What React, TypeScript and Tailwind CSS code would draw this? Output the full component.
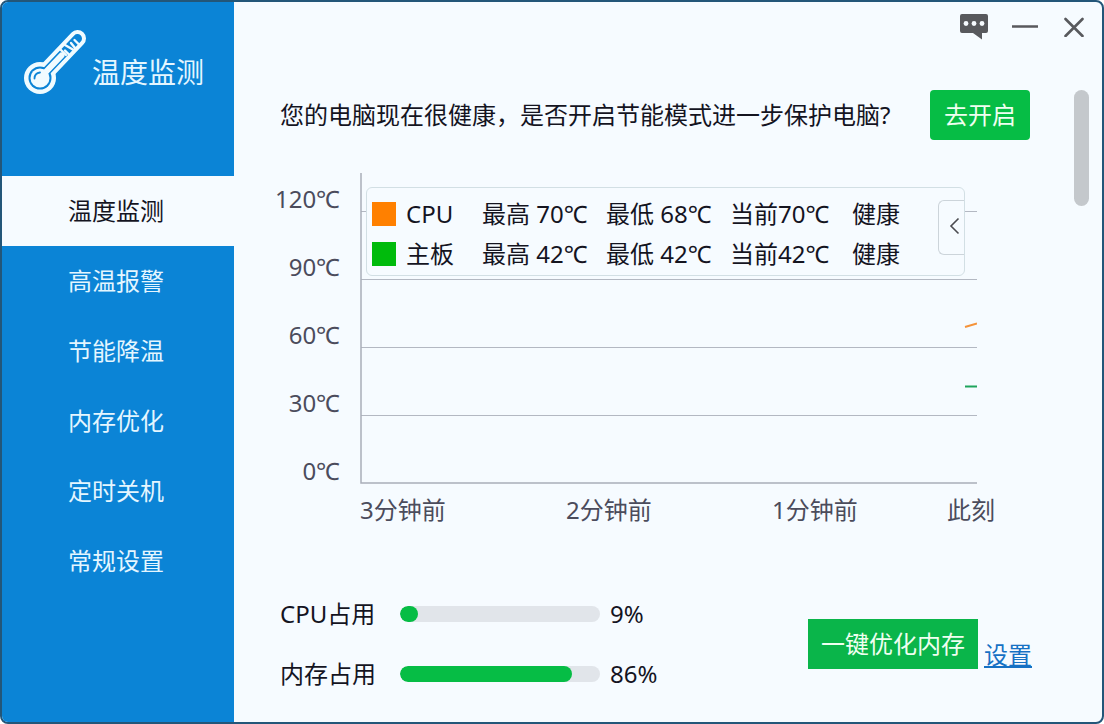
import { useState } from 'react';

const NAV_ITEMS = ['温度监测', '高温报警', '节能降温', '内存优化', '定时关机', '常规设置'];

const TEMP_LABELS = ['120℃', '90℃', '60℃', '30℃', '0℃'];
const GRID_LINES = [38, 106, 174, 242];

const SENSORS = [
  { name: 'CPU', color: 'bg-[#ff8000]', max: 70, min: 68, current: 70, status: '健康' },
  { name: '主板', color: 'bg-[#00bb0c]', max: 42, min: 42, current: 42, status: '健康' },
];

const USAGE = [
  { label: 'CPU占用', value: 9 },
  { label: '内存占用', value: 86 },
];

function ThermometerIcon() {
  return (
    <svg width="66" height="68" viewBox="0 0 66 68" fill="none" strokeLinecap="round" aria-hidden="true">
      {/* Glass */}
      <circle cx="18" cy="50" r="16" fill="#f0fbff" />
      <path d="M18 50 L55.500 10.500" stroke="#f0fbff" strokeWidth="17" />
      <circle cx="18" cy="50" r="11.500" fill="#0b84d6" />
      <path d="M18 50 L55.500 10.500" stroke="#0b84d6" strokeWidth="9" />
      {/* Mercury */}
      <circle cx="18" cy="50" r="9.500" fill="#f0fbff" />
      <path d="M18 50 L39.500 27.500" stroke="#f0fbff" strokeWidth="6" />
      <path d="M12.500 50.500 C12.500 47 14.500 45 18 44.500" stroke="#0b84d6" strokeWidth="1.800" />
      {/* Scale */}
      <path
        d="M38.500 21.500 L44 27 M43 22.500 L48 27.500 M43 17 L52.500 22.500 M49 15 L53 20 M52.500 12 L57.500 17"
        stroke="#f0fbff"
        strokeWidth="2.400"
      />
    </svg>
  );
}

function TitleBar() {
  return (
    <header className="mb-[38px] flex h-[50px] items-center justify-end pr-[18px] text-[#58595d]">
      <button type="button" aria-label="反馈" className="mr-6">
        <svg width="28" height="28" viewBox="0 0 28 28" aria-hidden="true">
          <path
            d="M2 1 H26 Q28 1 28 3 V18 Q28 20 26 20 H22 V26.500 L13 20 H2 Q0 20 0 18 V3 Q0 1 2 1 Z"
            fill="currentColor"
          />
          <circle cx="6" cy="10.500" r="2.400" fill="#f6fbff" />
          <circle cx="14" cy="10.500" r="2.400" fill="#f6fbff" />
          <circle cx="22" cy="10.500" r="2.400" fill="#f6fbff" />
        </svg>
      </button>
      <button type="button" aria-label="最小化" className="mr-[26px]">
        <svg width="26" height="20" viewBox="0 0 26 20" aria-hidden="true">
          <path d="M0 9.500 H26" stroke="currentColor" strokeWidth="2.600" />
        </svg>
      </button>
      <button type="button" aria-label="关闭">
        <svg width="20" height="20" viewBox="0 0 20 20" aria-hidden="true">
          <path d="M1.500 2 L18.500 19 M18.500 2 L1.500 19" stroke="currentColor" strokeWidth="2.600" strokeLinecap="round" />
        </svg>
      </button>
    </header>
  );
}

function Legend() {
  return (
    <div className="absolute top-3.5 right-3 left-1.5 h-[89px] rounded-md border border-[#d2dfe4] bg-[#f6fbff]">
      <table className="mt-1.5 ml-[5px] table-fixed border-collapse text-left whitespace-nowrap">
        <tbody>
          {SENSORS.map((s) => (
            <tr key={s.name} className="h-10">
              <td className="w-[34px] p-0">
                <span className={`block h-6 w-6 ${s.color}`} />
              </td>
              <th scope="row" className="w-[76px] p-0 font-normal">{s.name}</th>
              <td className="w-[124px] p-0">最高 {s.max}℃</td>
              <td className="w-[124px] p-0">最低 {s.min}℃</td>
              <td className="w-[122px] p-0">当前{s.current}℃</td>
              <td className="p-0">{s.status}</td>
            </tr>
          ))}
        </tbody>
      </table>
      <button
        type="button"
        aria-label="收起"
        className="absolute top-3 right-0 flex h-[55px] w-[26px] items-center justify-end rounded-l-md border border-r-0 border-[#ccd4da] pr-1 pb-1"
      >
        <svg width="12" height="18" viewBox="0 0 12 18" fill="none" aria-hidden="true">
          <path d="M10.500 1.500 L3 9 L10.500 16.500" stroke="#4b4b50" strokeWidth="1.600" />
        </svg>
      </button>
    </div>
  );
}

function TemperatureChart() {
  return (
    <section className="mt-[33px] flex text-[#4b4c5c]">
      <div className="-mt-2 w-[86px] shrink-0 pr-5 text-right">
        {TEMP_LABELS.map((t) => (
          <div key={t} className="flex h-[68px] items-center justify-end">{t}</div>
        ))}
      </div>

      <div className="mr-[55px] min-w-0 flex-1">
        <div className="relative text-[#14141f]">
          <svg
            className="block h-[311px] w-full"
            viewBox="0 0 617 311"
            preserveAspectRatio="none"
            fill="none"
            aria-hidden="true"
          >
            {GRID_LINES.map((y) => (
              <path key={y} d={`M1 ${y}.5 H617`} stroke="#b3b8c2" />
            ))}
            <path d="M1 0 V310 H617" stroke="#a9aeb9" strokeWidth="1.500" />
            <path d="M605 154 L617 150.500" stroke="#f5933a" strokeWidth="2" />
            <path d="M605 213.500 H617" stroke="#1fa45c" strokeWidth="2" />
          </svg>
          <Legend />
        </div>
        <div className="mt-2 -mr-[18px] grid grid-cols-[206fr_206fr_175fr_48px] whitespace-nowrap">
          <span>3分钟前</span>
          <span>2分钟前</span>
          <span>1分钟前</span>
          <span>此刻</span>
        </div>
      </div>
    </section>
  );
}

export default function App() {
  const [active, setActive] = useState(NAV_ITEMS[0]);

  return (
    <div className="flex min-h-screen overflow-hidden rounded-lg border-2 border-[#235679] bg-[#f6fbff] font-['Noto_Sans','Noto_Sans_CJK_SC',sans-serif] text-[24px] leading-9 text-[#14141f]">
      {/* Sidebar */}
      <aside className="w-[232px] shrink-0 bg-[#0b84d6] text-[#e4f6ff]">
        <div className="flex h-[174px] items-start gap-1 pt-[26px] pl-5">
          <ThermometerIcon />
          <h1 className="pt-[26px] text-[28px] whitespace-nowrap">温度监测</h1>
        </div>
        <nav>
          {NAV_ITEMS.map((item) => (
            <button
              key={item}
              type="button"
              onClick={() => setActive(item)}
              className={`block h-[70px] w-full pl-[66px] text-left ${item === active ? 'bg-[#f6fbff] text-[#14141f]' : ''}`}
            >
              {item}
            </button>
          ))}
        </nav>
      </aside>

      <main className="min-w-0 flex-1">
        <TitleBar />
        <div className="flex items-start justify-between pr-[13px] pl-10">
          <div className="min-w-0 flex-1">
            {/* Health notice */}
            <div className="flex items-center justify-between pr-0.5 pl-1.5 whitespace-nowrap">
              <p>您的电脑现在很健康，是否开启节能模式进一步保护电脑?</p>
              <button type="button" className="h-[50px] w-[100px] rounded bg-[#06bd45] text-[#effff0]">
                去开启
              </button>
            </div>

            <TemperatureChart />

            {/* Usage */}
            <section className="mt-14 flex items-center justify-between pl-1.5">
              <div>
                {USAGE.map((u) => (
                  <div key={u.label} className="flex h-[60px] items-center">
                    <span className="w-[120px]">{u.label}</span>
                    <div
                      role="progressbar"
                      aria-label={u.label}
                      aria-valuenow={u.value}
                      className="h-4 w-[200px] overflow-hidden rounded-full bg-[#e1e5ea]"
                    >
                      <div className="h-full rounded-full bg-[#06bd45]" style={{ width: `${u.value}%` }} />
                    </div>
                    <span className="ml-2.5">{u.value}%</span>
                  </div>
                ))}
              </div>
              <div className="flex items-end gap-1.5 whitespace-nowrap">
                <button type="button" className="h-[50px] w-[170px] bg-[#0ab54a] text-[#effff0]">
                  一键优化内存
                </button>
                <a href="#settings" className="leading-7 text-[#1671c4] underline">设置</a>
              </div>
            </section>
          </div>

          {/* Scroll thumb */}
          <div className="ml-[42px] h-[116px] w-[15px] shrink-0 rounded-full bg-[#c4c8cc]" />
        </div>
      </main>
    </div>
  );
}
